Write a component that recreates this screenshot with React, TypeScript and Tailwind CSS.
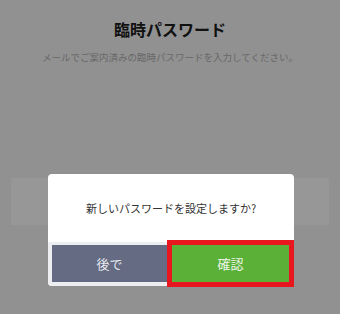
export default function App() {
    return (
        <div
            className="relative h-[314px] w-[340px] overflow-hidden bg-[#919191]"
            style={{ fontFamily: '"Noto Sans CJK JP", "Noto Sans", sans-serif' }}
        >
            <div className="flex flex-col items-center pt-[20px]">
                <h1 className="text-[16px] font-bold leading-[18px] text-[#111]">臨時パスワード</h1>
                <p className="mt-[13px] text-[9.5px] leading-[12px] text-[#686868]">
                    メールでご案内済みの臨時パスワードを入力してください。
                </p>
            </div>
            <div className="mx-[11px] mt-[115px] h-[47px] bg-[#979797]" />

            {/* confirm dialog */}
            <div className="absolute left-[48px] top-[174px] w-[246px] rounded-[4px] bg-white">
                <div className="flex h-[68px] items-center justify-center text-[11px] text-[#333]">
                    新しいパスワードを設定しますか?
                </div>
                <div className="flex gap-[5px] rounded-b-[4px] bg-[#eceef2] pb-[4px] pl-[4px] pr-[5px] pt-[3px]">
                    <button className="flex h-[37px] w-[115px] items-center justify-center bg-[#646b82] text-[13px] text-[#e6e8ee]">
                        後で
                    </button>
                    <button className="relative flex h-[37px] flex-1 items-center justify-center bg-[#5bb037] text-[13px] text-[#eef6ea]">
                        確認
                        <span className="absolute -inset-[5px] border-[5px] border-[#e8161e]" />
                    </button>
                </div>
            </div>
        </div>
    )
}
